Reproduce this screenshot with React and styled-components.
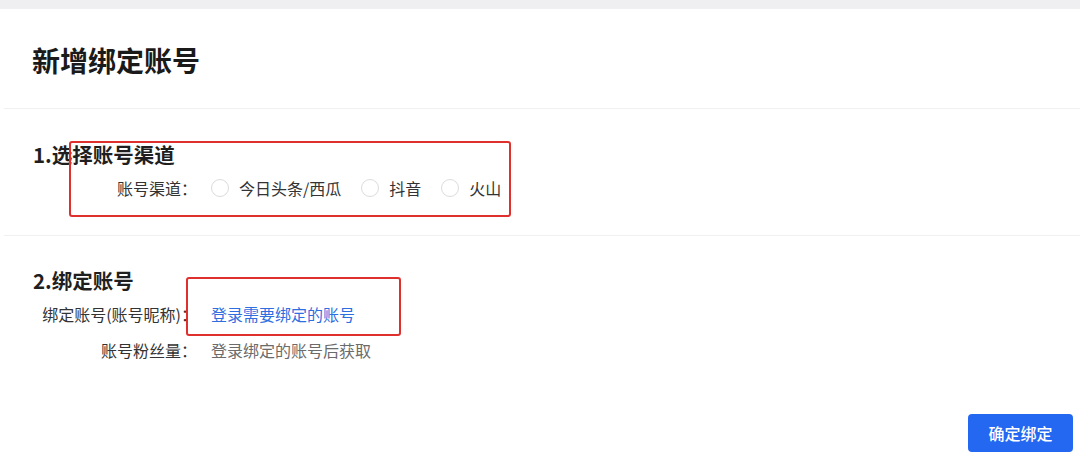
import React, { useState } from 'react';
import styled, { createGlobalStyle } from 'styled-components';

const GlobalStyle = createGlobalStyle`
  html, body {
    margin: 0;
    padding: 0;
    background: #ffffff;
    font-family: "Noto Sans CJK SC", "Noto Sans", "Liberation Sans", sans-serif;
    color: #333333;
  }
`;

const Page = styled.div`
  width: 1080px;
  height: 472px;
  display: flex;
  flex-direction: column;
  overflow: hidden;
  background: #ffffff;
`;

const TopStrip = styled.div`
  height: 9px;
  background: #efeff1;
  flex-shrink: 0;
`;

const Header = styled.div`
  height: 99px;
  display: flex;
  align-items: center;
  padding: 3px 0 0 32px;
  box-sizing: border-box;
`;

const Title = styled.h1`
  margin: 0;
  font-size: 28px;
  font-weight: 700;
  color: #1a1a1a;
`;

const Divider = styled.div`
  height: 1px;
  margin-left: 4px;
  background: #f0f0f2;
  flex-shrink: 0;
`;

const Section = styled.section`
  position: relative;
  display: flex;
  flex-direction: column;
  padding: ${p => p.$top}px 0 ${p => p.$bottom}px 33px;
`;

const SectionTitle = styled.h2`
  margin: 0 0 1px;
  height: 30px;
  line-height: 30px;
  font-size: 20.5px;
  font-weight: 600;
  color: #1f1f1f;
`;

const FormRow = styled.div`
  display: grid;
  grid-template-columns: 164px 1fr;
  column-gap: 14px;
  align-items: center;
  height: 36px;
  font-size: 16px;
`;

const Label = styled.div`
  text-align: right;
  color: #333333;
  white-space: nowrap;
`;

const Value = styled.div`
  color: ${p => (p.$muted ? '#6b6b6b' : '#333333')};
  white-space: nowrap;
`;

const Link = styled.a`
  color: #2f6ee0;
  text-decoration: none;
  cursor: pointer;
`;

const RadioGroup = styled.div`
  display: flex;
  align-items: center;
  gap: 20px;
`;

const RadioItem = styled.label`
  display: flex;
  align-items: center;
  gap: 10px;
  cursor: pointer;
  color: #333333;
`;

const RadioCircle = styled.span`
  width: 16px;
  height: 16px;
  border-radius: 50%;
  border: 1px solid ${p => (p.$checked ? '#2468f2' : '#dcdce0')};
  background: #ffffff;
  display: inline-flex;
  align-items: center;
  justify-content: center;
  box-sizing: content-box;

  &::after {
    content: '';
    width: 8px;
    height: 8px;
    border-radius: 50%;
    background: ${p => (p.$checked ? '#2468f2' : 'transparent')};
  }
`;

const Highlight = styled.div`
  position: absolute;
  border: 2px solid #e0302e;
  border-radius: 3px;
  pointer-events: none;
  box-sizing: border-box;
`;

const Footer = styled.div`
  display: flex;
  justify-content: flex-end;
  padding: 46px 7px 0 0;
`;

const PrimaryButton = styled.button`
  width: 105px;
  height: 38px;
  border: none;
  border-radius: 4px;
  background: #2468f2;
  color: #ffffff;
  font-family: inherit;
  font-size: 16px;
  font-weight: 500;
  cursor: pointer;
`;

const channels = ['今日头条/西瓜', '抖音', '火山'];

export default function App() {
  const [channel, setChannel] = useState(null);

  return (
    <Page>
      <GlobalStyle />
      <TopStrip />
      <Header>
        <Title>新增绑定账号</Title>
      </Header>
      <Divider />

      <Section $top={30} $bottom={29}>
        <SectionTitle>1.选择账号渠道</SectionTitle>
        <FormRow>
          <Label>账号渠道：</Label>
          <RadioGroup>
            {channels.map(c => (
              <RadioItem key={c} onClick={() => setChannel(c)}>
                <RadioCircle $checked={channel === c} />
                {c}
              </RadioItem>
            ))}
          </RadioGroup>
        </FormRow>
        <Highlight style={{ left: 69, top: 32, width: 442, height: 76 }} />
      </Section>
      <Divider />

      <Section $top={29} $bottom={0}>
        <SectionTitle>2.绑定账号</SectionTitle>
        <FormRow>
          <Label>绑定账号(账号昵称)：</Label>
          <Value>
            <Link>登录需要绑定的账号</Link>
          </Value>
        </FormRow>
        <FormRow>
          <Label>账号粉丝量：</Label>
          <Value $muted>登录绑定的账号后获取</Value>
        </FormRow>
        <Highlight style={{ left: 186, top: 41, width: 215, height: 59 }} />
      </Section>

      <Footer>
        <PrimaryButton>确定绑定</PrimaryButton>
      </Footer>
    </Page>
  );
}
